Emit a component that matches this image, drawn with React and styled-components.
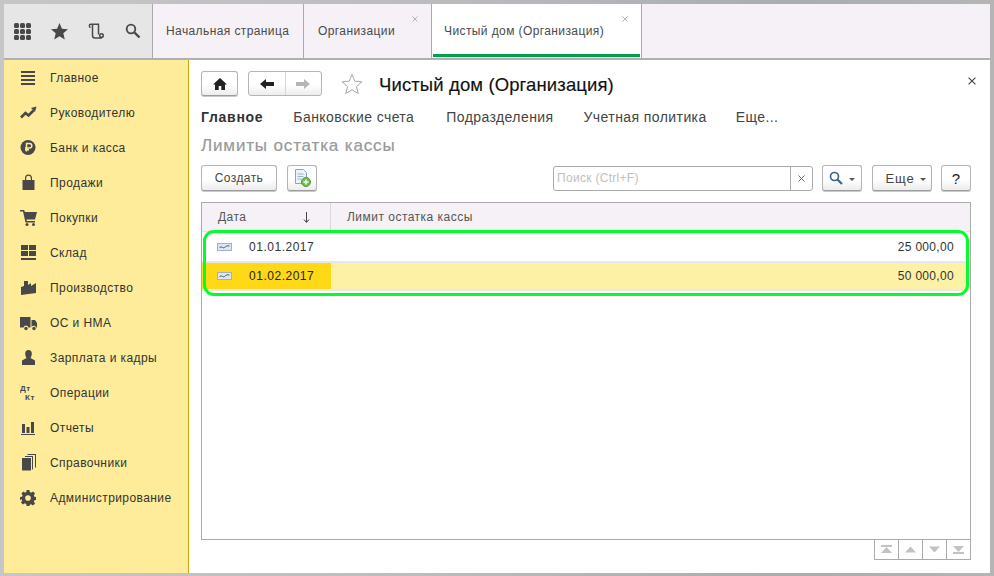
import React from 'react'
import styled, { createGlobalStyle } from 'styled-components'

const GlobalStyle = createGlobalStyle`
  html, body {
    margin: 0;
    padding: 0;
    width: 994px;
    height: 576px;
    overflow: hidden;
    font-family: "Liberation Sans", Arial, sans-serif;
    font-size: 12px;
    color: #333;
  }
`

const Frame = styled.div`
  box-sizing: border-box;
  width: 994px;
  height: 576px;
  padding: 4px 4px 3px 4px;
  background: linear-gradient(90deg, #c6c6c6, #bdbdc0 40%, #a9adb0 80%, #b5b5b5);
  display: flex;
  flex-direction: column;
`

const TopBar = styled.header`
  height: 54px;
  flex: none;
  display: flex;
  background: #f5f1f6;
  border-bottom: 2px solid #b0afb1;
  box-sizing: content-box;
`

const QuickTools = styled.div`
  width: 149px;
  flex: none;
  display: flex;
  align-items: center;
  background: #e6e6e6;
  padding-left: 9px;
  gap: 20px;
  box-sizing: border-box;
  border-right: 1px solid #aaa;
  svg { flex: none; }
`

const TabItem = styled.div`
  position: relative;
  box-sizing: border-box;
  width: ${p => p.$width}px;
  flex: none;
  padding-left: ${p => p.$pad}px;
  line-height: 55px;
  color: #4a4a4a;
  letter-spacing: 0.4px;
  white-space: nowrap;
  border-right: 1px solid #aaa;
  background: ${p => p.$active ? '#fff' : 'transparent'};
  &::after {
    content: ${p => p.$active ? '""' : 'none'};
    position: absolute;
    left: 1px;
    right: 1px;
    bottom: 1px;
    height: 3px;
    background: #00a04c;
  }
`

const TabClose = styled.span`
  position: absolute;
  top: 12px;
  right: 13px;
  display: flex;
`

const Body = styled.div`
  flex: 1;
  display: flex;
  min-height: 0;
`

const Sidebar = styled.nav`
  width: 185px;
  flex: none;
  box-sizing: border-box;
  background: #feec9a;
  border-right: 1px solid #c9a90c;
`

const SideRow = styled.div`
  height: 35px;
  display: flex;
  align-items: center;
  color: #333;
  letter-spacing: 0.42px;
  white-space: nowrap;
`

const SideIcon = styled.span`
  width: 46px;
  padding-left: 16px;
  box-sizing: border-box;
  flex: none;
  display: flex;
  align-items: center;
`

const Main = styled.main`
  position: relative;
  flex: 1;
  background: #fff;
  padding: 11px 19px 0 12px;
  display: flex;
  flex-direction: column;
  min-width: 0;
`

const CloseForm = styled.span`
  position: absolute;
  top: 17px;
  right: 14px;
  display: flex;
`

const TitleRow = styled.div`
  height: 25px;
  display: flex;
  align-items: center;
`

const Bevel = styled.button`
  box-sizing: border-box;
  height: ${p => p.$tall ? 26 : 25}px;
  width: ${p => p.$w}px;
  margin: 0 0 0 ${p => p.$gap || 0}px;
  padding: 0 0 0 ${p => p.$inset || 0}px;
  flex: none;
  display: flex;
  align-items: center;
  justify-content: center;
  font: inherit;
  font-size: ${p => p.$size || 12}px;
  color: ${p => p.$ink || '#444'};
  letter-spacing: ${p => p.$track ?? 0.4}px;
  border: 1px solid #b4b4b4;
  border-bottom-color: #9c9c9c;
  border-radius: 3px;
  background: linear-gradient(#fff 55%, #ededed);
  box-shadow: 0 1px 0 #c9c9c9;
`

const NavGroup = styled.div`
  box-sizing: border-box;
  margin-left: 10px;
  width: 74px;
  height: 25px;
  display: flex;
  border: 1px solid #b4b4b4;
  border-radius: 3px;
  background: linear-gradient(#fff 55%, #ededed);
`

const NavHalf = styled.span`
  flex: 1;
  display: flex;
  align-items: center;
  justify-content: center;
  & + & { border-left: 1px solid #d6d6d6; }
`

const FavStar = styled.svg`
  margin-left: 19px;
  flex: none;
`

const Title = styled.h1`
  margin: 2px 0 0 16px;
  font-size: 18.5px;
  font-weight: 400;
  color: #111;
  letter-spacing: 0.12px;
  white-space: nowrap;
  -webkit-text-stroke: 0.15px #111;
`

const FormTabs = styled.div`
  margin-top: 12px;
  height: 18px;
  display: flex;
  align-items: center;
  font-size: 14px;
  color: #444;
  white-space: nowrap;
`

const FormTab = styled.span`
  margin-right: ${p => p.$gap}px;
  font-weight: ${p => p.$active ? 700 : 400};
  color: ${p => p.$active ? '#333' : '#444'};
  letter-spacing: ${p => p.$active ? 0.72 : 0.42}px;
`

const Subtitle = styled.h2`
  margin: 10px 0 0;
  font-size: 17px;
  line-height: 20px;
  font-weight: 400;
  color: #999;
  letter-spacing: 0.85px;
  -webkit-text-stroke: 0.2px #999;
`

const Toolbar = styled.div`
  margin-top: 9px;
  height: 26px;
  display: flex;
  align-items: center;
`

const SearchBox = styled.div`
  box-sizing: border-box;
  margin-left: 236px;
  width: 260px;
  height: 25px;
  flex: none;
  display: flex;
  border: 1px solid #aaa;
  border-radius: 3px;
  background: #fff;
`

const SearchText = styled.span`
  flex: 1;
  line-height: 23px;
  padding-left: 3px;
  color: #c0c0c0;
  letter-spacing: 0.3px;
`

const SearchClear = styled.span`
  width: 21px;
  flex: none;
  border-left: 1px solid #aaa;
  display: flex;
  align-items: center;
  justify-content: center;
`

const Caret = styled.span`
  display: inline-block;
  width: 0;
  height: 0;
  margin-left: 6px;
  margin-top: 2px;
  border-left: 3px solid transparent;
  border-right: 3px solid transparent;
  border-top: 3px solid #555;
`

const Table = styled.div`
  position: relative;
  box-sizing: border-box;
  margin-top: 11px;
  width: 770px;
  height: 338px;
  border: 1px solid #aaa;
  flex: none;
`

const HeadRow = styled.div`
  height: 28px;
  display: flex;
  background: #f5f1f6;
  color: #555;
  letter-spacing: 0.48px;
  line-height: 28px;
  border-bottom: 1px solid #e4e4e4;
`

const HeadCell = styled.div`
  box-sizing: border-box;
  width: ${p => p.$w ? `${p.$w}px` : 'auto'};
  flex: ${p => p.$w ? 'none' : 1};
  padding: 0 20px 0 16px;
  display: flex;
  align-items: center;
  justify-content: space-between;
  border-right: ${p => p.$w ? '1px solid #d8d8d8' : 'none'};
`

const DataRow = styled.div`
  height: ${p => p.$h}px;
  display: flex;
  align-items: stretch;
  background: ${p => p.$current ? '#fdf1a6' : '#fff'};
  border-bottom: 2px solid #e8e8e8;
  box-sizing: content-box;
  letter-spacing: 0.32px;
`

const DateCell = styled.div`
  box-sizing: border-box;
  width: 129px;
  flex: none;
  padding-left: 15px;
  gap: 17px;
  display: flex;
  align-items: center;
  letter-spacing: 0.52px;
  color: ${p => p.$current ? '#222' : '#333'};
  background: ${p => p.$current ? '#ffd916' : 'transparent'};
`

const AmountCell = styled.div`
  flex: 1;
  display: flex;
  align-items: center;
  justify-content: flex-end;
  padding-right: 16px;
  color: #333;
`

const Highlight = styled.div`
  position: absolute;
  left: 1px;
  top: 27px;
  width: 766px;
  height: 66px;
  box-sizing: border-box;
  border: 3px solid #00ff2a;
  border-radius: 11px;
  pointer-events: none;
`

const Pager = styled.div`
  align-self: flex-end;
  width: 97px;
  height: 21px;
  margin-top: -1px;
  box-sizing: border-box;
  display: flex;
  border: 1px solid #aaa;
  background: #fff;
`

const PagerCell = styled.span`
  flex: 1;
  display: flex;
  align-items: center;
  justify-content: center;
  & + & { border-left: 1px solid #aaa; }
`

const X = ({ size = 6, color = '#aaa' }) => (
  <svg width={size} height={size} viewBox="0 0 7 7">
    <path d="M.5.5l6 6M6.500.5l-6 6" stroke={color} fill="none" />
  </svg>
)

const Ico = ({ children, size = 17 }) => (
  <svg width={size} height={size} viewBox="0 0 17 17" fill="#484848">{children}</svg>
)

const sideItems = [
  ['Главное', <Ico><path d="M1 2h14v2H1zM1 6h14v2H1zM1 10h14v2H1zM1 14h14v2H1z" /></Ico>],
  ['Руководителю', <Ico><path d="M1 13.500l4.500-4.500 3 2.500 5-5" stroke="#484848" strokeWidth="2.600" fill="none" /><path d="M11 4l5.500-1.500L15 8z" /></Ico>],
  ['Банк и касса', <Ico><circle cx="8" cy="8.500" r="7.500" /><path d="M6.500 12.500V4.500h3a2.300 2.300 0 010 4.600h-4.500M5 10.800h4" stroke="#feec9a" strokeWidth="1.500" fill="none" /></Ico>],
  ['Продажи', <Ico><path d="M2.500 6H5V4a3.500 3.500 0 017 0v2h2.500v10h-12zM6.200 6h4.600V4a2.300 2.300 0 00-4.600 0z" fillRule="evenodd" /></Ico>],
  ['Покупки', <Ico><path d="M0 1h4l1 2h12l-2 7.500H6.500l.3 1.500H15v1.500H5.500L3 2.500H0z" /><circle cx="7" cy="15.500" r="1.500" /><circle cx="13.500" cy="15.500" r="1.500" /></Ico>],
  ['Склад', <Ico><path d="M1 1h7v5H1zM9 1h7v5H9zM1 7h7v5H1zM9 7h7v5H9zM1 14h15v2H1z" /></Ico>],
  ['Производство', <Ico><path d="M1 16V8l3-1V2h4v4l3-2v3l5-3v10z" /></Ico>],
  ['ОС и НМА', <Ico><path d="M0 3h10.500v10.500H8.500a2.600 2.600 0 00-5 0H0zM11.500 6H15l2 3v4.500h-.8a2.600 2.600 0 00-4.700-.6z" /><circle cx="6" cy="14.500" r="1.700" /><circle cx="14" cy="14.500" r="1.700" /></Ico>],
  ['Зарплата и кадры', <Ico><path d="M8.500 1c2.200 0 3.300 1.500 3.300 3.500S11 8 10.500 9l4.500 2.500V16H2v-4.500L6.500 9C6 8 5.200 6.500 5.200 4.500S6.300 1 8.500 1z" /></Ico>],
  ['Операции', (
    <Ico>
      <text x="0" y="7" fontSize="8" letterSpacing=".6" fontWeight="700" fontFamily="Liberation Sans, sans-serif">Дт</text>
      <text x="5" y="16" fontSize="8" letterSpacing=".6" fontWeight="700" fontFamily="Liberation Sans, sans-serif">Кт</text>
    </Ico>
  )],
  ['Отчеты', <Ico><path d="M2 5h3v9H2zM6.500 8h3v6h-3zM11 3h3v11h-3zM1 15h14v1H1z" /></Ico>],
  ['Справочники', <Ico><path d="M2 4h9v12.500H2zM12 3v12.500h1V2H5v1zM15 .5v13h1V0H7.500v1H15z" /></Ico>],
  ['Администрирование', <Ico size={16}><path d="M7 0h3l.4 2.200 1.500.6L13.800 1.500 16 3.700l-1.300 1.900.6 1.500 2.200.4v3l-2.200.4-.6 1.500 1.300 1.900-2.200 2.200-1.900-1.300-1.500.6L10 17H7l-.4-2.200-1.500-.6-1.900 1.300L1 13.300l1.300-1.900-.6-1.500L0 10.500v-3l2.200-.4.600-1.500L1.500 3.700 3.700 1.500l1.900 1.300 1-.6zM8.500 5.500a3 3 0 100 6 3 3 0 000-6z" fillRule="evenodd" /></Ico>]
]

const ChartMark = () => (
  <svg width="15" height="8" viewBox="0 0 15 8">
    <rect x=".5" y=".5" width="14" height="7" fill="#dde6f2" stroke="#9fb1c6" />
    <path d="M2.500 5c2-3 3 1 5-.5s2-2 5-1.500" stroke="#40556f" fill="none" />
  </svg>
)

const PagerIcon = ({ down, bar }) => (
  <svg width="13" height="9" viewBox="0 0 13 9" fill="#c2c2c2">
    <g transform={down ? 'matrix(1 0 0 -1 0 9)' : undefined}>
      {bar && <rect x="1" y="0" width="11" height="2" />}
      <path d={bar ? 'M6.500 2L12 8H1z' : 'M6.500 1.500L12 7.500H1z'} />
    </g>
  </svg>
)

export default function App () {
  return (
    <Frame>
      <GlobalStyle />
      <TopBar>
        <QuickTools>
          <svg width="18" height="18" viewBox="0 0 18 18" fill="#484848">
            {[0, 1, 2].flatMap(r => [0, 1, 2].map(c => (
              <rect key={`${r}${c}`} x={1 + c * 6} y={1 + r * 6} width="5" height="5" rx="1.500" />
            )))}
          </svg>
          <svg width="17" height="17" viewBox="0 0 17 17" fill="#484848">
            <path d="M8.500 0l2.400 5.800 6.100.5-4.700 4 1.500 6.200-5.300-3.300-5.300 3.300 1.500-6.200L0 6.300l6.100-.5z" />
          </svg>
          <svg width="17" height="17" viewBox="0 0 17 17" fill="none" stroke="#484848" strokeWidth="1.500">
            <path d="M2.500 1.200h8v10.300M2.500 1.200C1 1.200 1 4 2.500 4.500M4.500 2v10.500C4.500 14 5.500 15 7 15h7" />
            <circle cx="13.500" cy="12.500" r="1.800" />
          </svg>
          <svg width="16" height="16" viewBox="0 0 16 16" fill="none" stroke="#484848">
            <circle cx="6" cy="6" r="4.300" strokeWidth="1.800" />
            <path d="M9.500 9.500l5 5" strokeWidth="2.400" />
          </svg>
        </QuickTools>
        <TabItem $width={151} $pad={13}>Начальная страница</TabItem>
        <TabItem $width={128} $pad={14}>Организации<TabClose><X /></TabClose></TabItem>
        <TabItem $width={210} $pad={12} $active>Чистый дом (Организация)<TabClose><X /></TabClose></TabItem>
      </TopBar>
      <Body>
        <Sidebar>
          {sideItems.map(([label, icon]) => (
            <SideRow key={label}>
              <SideIcon>{icon}</SideIcon>
              {label}
            </SideRow>
          ))}
        </Sidebar>
        <Main>
          <CloseForm><X size={8} color="#444" /></CloseForm>
          <TitleRow>
            <Bevel $w={37}>
              <svg width="14" height="12" viewBox="0 0 14 12" fill="#222">
                <path d="M7 0l7 6.500h-2V12H8.300V8H5.700v4H2V6.500H0z" />
              </svg>
            </Bevel>
            <NavGroup>
              <NavHalf>
                <svg width="14" height="10" viewBox="0 0 14 10" fill="#222"><path d="M0 5l6-5v3h8v4H6v3z" /></svg>
              </NavHalf>
              <NavHalf>
                <svg width="14" height="10" viewBox="0 0 14 10" fill="#b5b5b5"><path d="M14 5L8 0v3H0v4h8v3z" /></svg>
              </NavHalf>
            </NavGroup>
            <FavStar width="22" height="22" viewBox="0 0 22 22" fill="#fff" stroke="#a8a8a8">
              <path d="M11 1.500l2.800 6.700 7.200.6-5.500 4.700 1.700 7-6.200-3.700-6.200 3.700 1.700-7L1 8.800l7.200-.6z" />
            </FavStar>
            <Title>Чистый дом (Организация)</Title>
          </TitleRow>
          <FormTabs>
            <FormTab $active $gap={30}>Главное</FormTab>
            <FormTab $gap={32}>Банковские счета</FormTab>
            <FormTab $gap={30}>Подразделения</FormTab>
            <FormTab $gap={29}>Учетная политика</FormTab>
            <FormTab $gap={0}>Еще...</FormTab>
          </FormTabs>
          <Subtitle>Лимиты остатка кассы</Subtitle>
          <Toolbar>
            <Bevel $w={76} $tall>Создать</Bevel>
            <Bevel $w={30} $tall $gap={10}>
              <svg width="17" height="18" viewBox="0 0 17 18">
                <path d="M1.500.5h8l3 3v11h-11z" fill="#eef3fa" stroke="#8fa3bb" />
                <path d="M3.500 5h6M3.500 7.500h6M3.500 10h4" stroke="#9db0c6" />
                <circle cx="12" cy="13" r="4.500" fill="#6fbf4b" stroke="#4f9a33" />
                <path d="M12 10.500v5M9.500 13h5" stroke="#fff" strokeWidth="1.500" />
              </svg>
            </Bevel>
            <SearchBox>
              <SearchText>Поиск (Ctrl+F)</SearchText>
              <SearchClear><X size={7} color="#666" /></SearchClear>
            </SearchBox>
            <Bevel $w={40} $tall $gap={9}>
              <svg width="14" height="14" viewBox="0 0 14 14" fill="none" stroke="#3d6690">
                <circle cx="5.500" cy="5.500" r="4" strokeWidth="1.700" />
                <path d="M8.500 8.500l4.500 4.500" strokeWidth="2.200" />
              </svg>
              <Caret />
            </Bevel>
            <Bevel $w={60} $tall $gap={10} $size={13} $track={0.8} $inset={8}>Еще<Caret /></Bevel>
            <Bevel $w={30} $tall $gap={9} $size={15} $ink="#222">?</Bevel>
          </Toolbar>
          <Table>
            <HeadRow>
              <HeadCell $w={129}>
                Дата
                <svg width="7" height="11" viewBox="0 0 7 11" fill="none" stroke="#444">
                  <path d="M3.500 0v10M1 7.500l2.500 3 2.500-3" />
                </svg>
              </HeadCell>
              <HeadCell>Лимит остатка кассы</HeadCell>
            </HeadRow>
            <DataRow $h={29}>
              <DateCell><ChartMark />01.01.2017</DateCell>
              <AmountCell>25 000,00</AmountCell>
            </DataRow>
            <DataRow $h={26} $current>
              <DateCell $current><ChartMark />01.02.2017</DateCell>
              <AmountCell>50 000,00</AmountCell>
            </DataRow>
            <Highlight />
          </Table>
          <Pager>
            <PagerCell><PagerIcon bar /></PagerCell>
            <PagerCell><PagerIcon /></PagerCell>
            <PagerCell><PagerIcon down /></PagerCell>
            <PagerCell><PagerIcon down bar /></PagerCell>
          </Pager>
        </Main>
      </Body>
    </Frame>
  )
}
